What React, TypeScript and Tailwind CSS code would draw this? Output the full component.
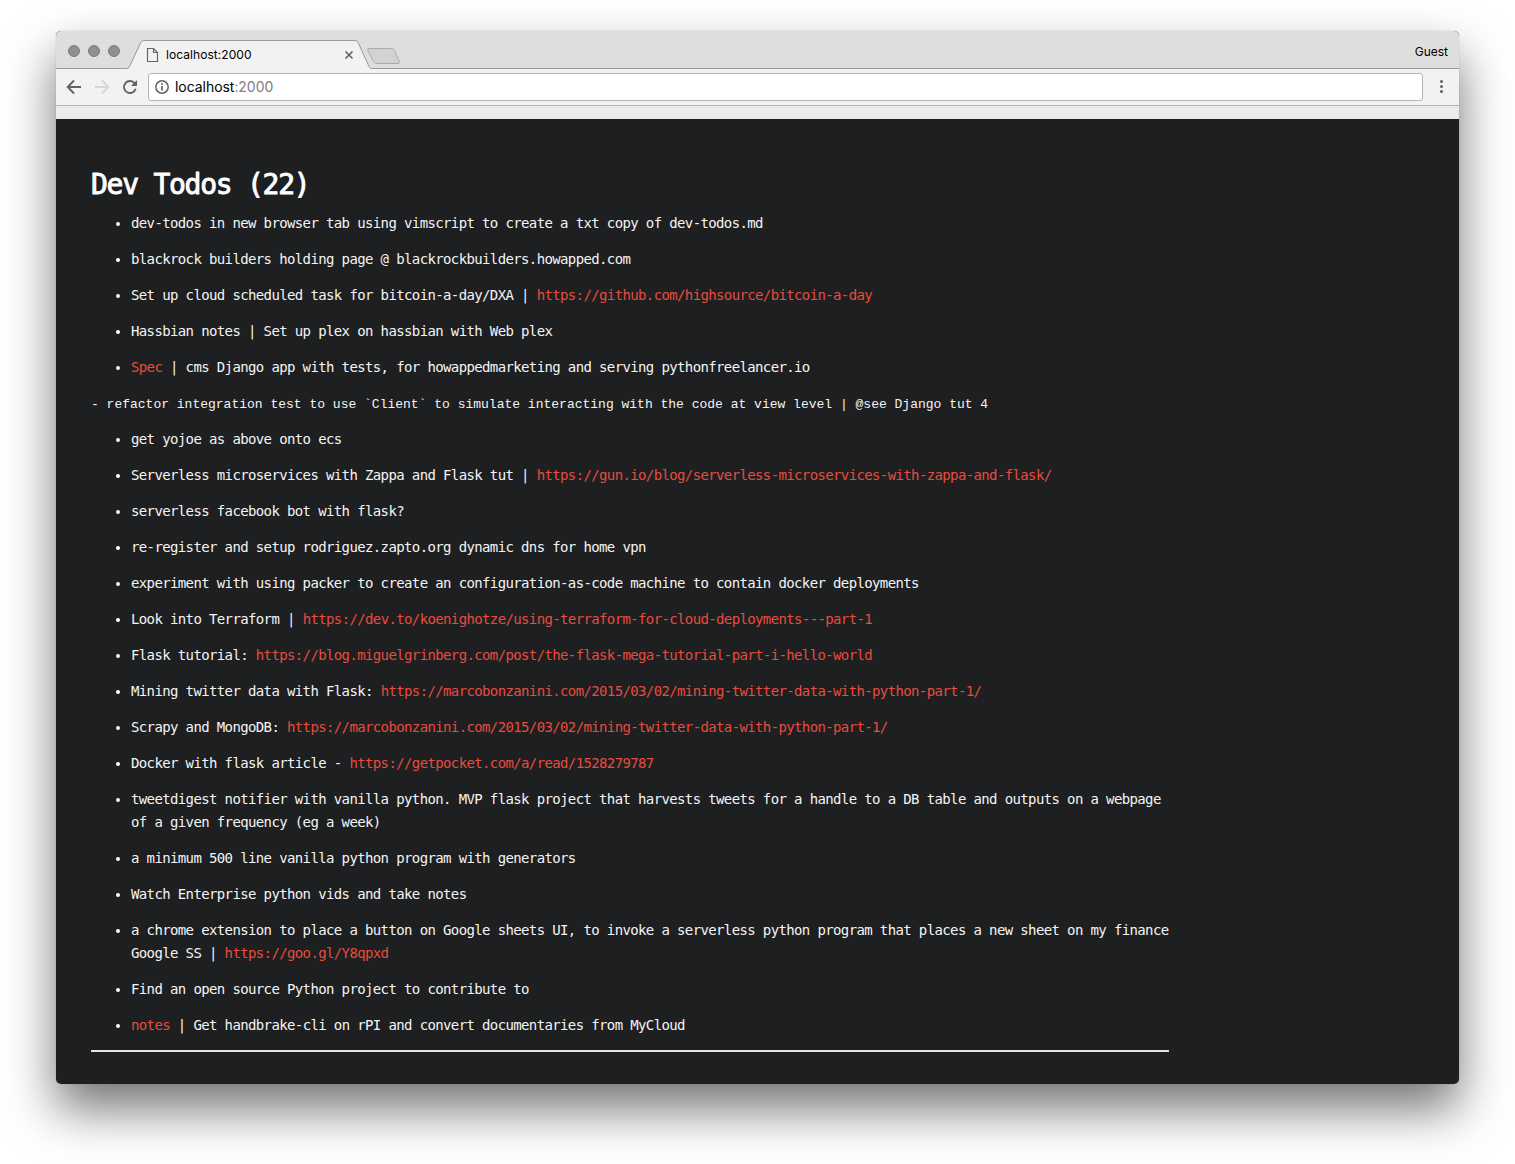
import React from "react";

function Link({ children }: { children: React.ReactNode }) {
  return <a className="text-[#e74c3c]">{children}</a>;
}

const firstItems: React.ReactNode[] = [
  "dev-todos in new browser tab using vimscript to create a txt copy of dev-todos.md",
  "blackrock builders holding page @ blackrockbuilders.howapped.com",
  <>Set up cloud scheduled task for bitcoin-a-day/DXA | <Link>https://github.com/highsource/bitcoin-a-day</Link></>,
  "Hassbian notes | Set up plex on hassbian with Web plex",
  <><Link>Spec</Link> | cms Django app with tests, for howappedmarketing and serving pythonfreelancer.io</>,
];

const restItems: React.ReactNode[] = [
  "get yojoe as above onto ecs",
  <>Serverless microservices with Zappa and Flask tut | <Link>https://gun.io/blog/serverless-microservices-with-zappa-and-flask/</Link></>,
  "serverless facebook bot with flask?",
  "re-register and setup rodriguez.zapto.org dynamic dns for home vpn",
  "experiment with using packer to create an configuration-as-code machine to contain docker deployments",
  <>Look into Terraform | <Link>https://dev.to/koenighotze/using-terraform-for-cloud-deployments---part-1</Link></>,
  <>Flask tutorial: <Link>https://blog.miguelgrinberg.com/post/the-flask-mega-tutorial-part-i-hello-world</Link></>,
  <>Mining twitter data with Flask: <Link>https://marcobonzanini.com/2015/03/02/mining-twitter-data-with-python-part-1/</Link></>,
  <>Scrapy and MongoDB: <Link>https://marcobonzanini.com/2015/03/02/mining-twitter-data-with-python-part-1/</Link></>,
  <>Docker with flask article - <Link>https://getpocket.com/a/read/1528279787</Link></>,
  <>tweetdigest notifier with vanilla python. MVP flask project that harvests tweets for a handle to a DB table and outputs on a webpage<br />of a given frequency (eg a week)</>,
  "a minimum 500 line vanilla python program with generators",
  "Watch Enterprise python vids and take notes",
  <>a chrome extension to place a button on Google sheets UI, to invoke a serverless python program that places a new sheet on my finance<br />Google SS | <Link>https://goo.gl/Y8qpxd</Link></>,
  "Find an open source Python project to contribute to",
  <><Link>notes</Link> | Get handbrake-cli on rPI and convert documentaries from MyCloud</>,
];

function TodoList({ items }: { items: React.ReactNode[] }) {
  return (
    <ul className="flex flex-col gap-[13px]">
      {items.map((item, i) => (
        <li key={i} className="flex whitespace-nowrap">
          <span className="mt-[10px] mr-[11px] ml-[25px] size-1 shrink-0 rounded-full bg-white" />
          <div>{item}</div>
        </li>
      ))}
    </ul>
  );
}

function TabStrip() {
  return (
    <div className="flex h-[38px] bg-[#dedede]">
      <div className="flex gap-2 pt-[14px] pl-3">
        <span className="size-3 rounded-full border border-[#7c7c80] bg-[#8e8e93]" />
        <span className="size-3 rounded-full border border-[#7c7c80] bg-[#8e8e93]" />
        <span className="size-3 rounded-full border border-[#7c7c80] bg-[#8e8e93]" />
      </div>
      <div className="relative -ml-16 h-[38px] w-full">
        <svg className="absolute inset-0" width="1403" height="38" viewBox="0 0 1403 38" fill="none">
          <path d="M73 38 L84.8 12 Q85.8 9.5 88 9.5 H299 Q301.2 9.5 302.2 12 L313 35.5 Q314 37.5 316 37.5 V38 Z" fill="#f2f2f2" />
          <path d="M0 37.5 H70.5 Q72.5 37.5 73.4 35.5 L84.8 11.5 Q85.8 9.5 88 9.5 H299 Q301.2 9.5 302.2 11.5 L313 35.5 Q314 37.5 316 37.5 H1403" stroke="#999" />
          <path d="M313 17.5 H335.5 Q337.5 17.5 338.5 19.5 L343.3 30.5 Q344 32.5 342 32.5 H321 Q318.5 32.5 317.5 30.5 L311.8 19.5 Q311 17.5 313 17.5 Z" fill="#d2d2d2" stroke="#aaa" />
          <path d="M91.500 17.500 H97.500 L101.500 21.500 V30.500 H91.500 Z M97.500 17.500 V21.500 H101.500" stroke="#666" strokeWidth="1.2" />
          <path d="M289.500 20.500 L296.500 27.500 M296.500 20.500 L289.500 27.500" stroke="#606060" strokeWidth="1.600" />
        </svg>
      </div>
    </div>
  );
}

function Toolbar() {
  return (
    <div className="flex h-[37px] items-center border-b border-[#b4b4b4] bg-[#f2f2f2]">
      <svg width="92" height="36" viewBox="0 0 92 36" fill="none" strokeWidth="1.9">
        <path d="M25 18 H12 M18 11.500 L11.700 18 L18 24.500" stroke="#636363" />
        <path d="M39 18 H52 M46 11.500 L52.300 18 L46 24.500" stroke="#d5d5d5" />
        <path d="M78.700 14.300 A6 6 0 1 0 79.700 19.800" stroke="#636363" />
        <path d="M81 11 V17 H75 Z" fill="#636363" />
      </svg>
      <div className="flex h-7 w-[1275px] items-center rounded-[3px] border border-[#b5b5b5] bg-white pl-[6px]">
        <svg width="14" height="14" viewBox="0 0 14 14" fill="none" stroke="#636363">
          <circle cx="7" cy="7" r="6.200" strokeWidth="1.500" />
          <path d="M7 6 V10.500 M7 3.300 V5" strokeWidth="1.700" />
        </svg>
        <span className="mb-[2px] ml-[6px] text-[14px] tracking-[-0.05px] text-black">
          localhost<span className="text-[#808080]">:2000</span>
        </span>
      </div>
      <div className="mb-px ml-[16.5px] flex flex-col gap-[2px]">
        <span className="size-[3px] rounded-full bg-[#636363]" />
        <span className="size-[3px] rounded-full bg-[#636363]" />
        <span className="size-[3px] rounded-full bg-[#636363]" />
      </div>
    </div>
  );
}

export default function App() {
  return (
    <div className="h-[1164px] w-[1515px] overflow-hidden bg-white pt-[31px] pl-[56px]">
      <div className="h-[1053px] w-[1403px] rounded-[5px] shadow-[0_25px_50px_rgba(0,0,0,0.55),0_0_1px_rgba(0,0,0,0.4)]">
        <div className="flex h-full flex-col overflow-hidden rounded-[5px] bg-[#1e1f21] font-[Inter,sans-serif]">
          <div className="relative shrink-0">
            <TabStrip />
            <span className="absolute top-[15px] left-[110px] text-[12px] leading-[18px] tracking-[0.06px] text-black">localhost:2000</span>
            <span className="absolute top-[12px] right-[11px] text-[12px] leading-[18px] text-black">Guest</span>
          </div>
          <Toolbar />
          <div className="h-[13px] shrink-0 bg-[#ebebeb]" />
          <main className="w-[1113px] pt-[46px] pl-[35px] font-['DejaVu_Sans_Mono',monospace] text-[14px] leading-[23px] tracking-[-0.628px] text-[#f4f4f4]">
            <h1 className="mb-[7px] text-[28px] leading-[40px] font-normal tracking-[-1.256px] text-white [-webkit-text-stroke:0.9px_white]">Dev Todos (22)</h1>
            <TodoList items={firstItems} />
            <pre className="mt-[14px] mb-3 font-['Liberation_Mono',monospace] text-[13px] leading-[23px] tracking-normal">
              - refactor integration test to use `Client` to simulate interacting with the code at view level | @see Django tut 4
            </pre>
            <TodoList items={restItems} />
            <hr className="mt-[13px] border-t-2 border-[#e4e4e4]" />
          </main>
        </div>
      </div>
    </div>
  );
}
